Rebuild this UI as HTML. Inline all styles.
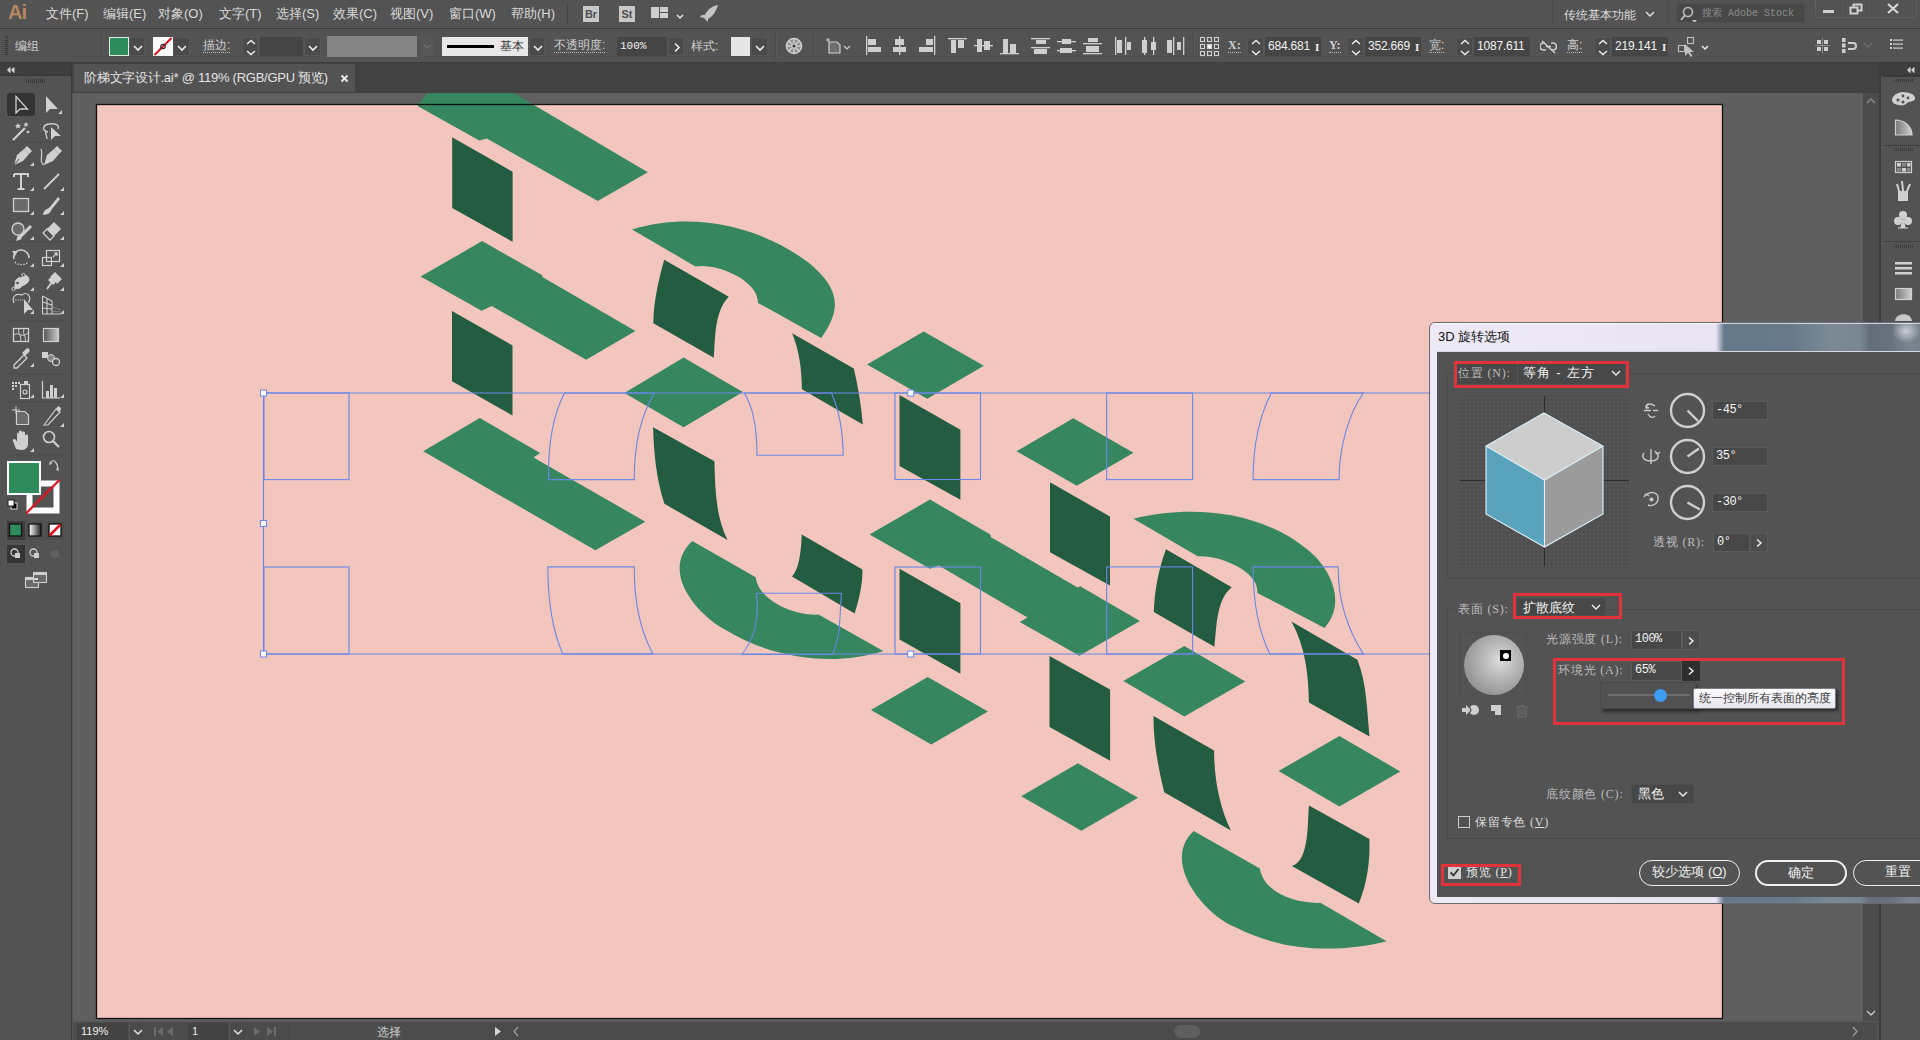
<!DOCTYPE html>
<html><head><meta charset="utf-8">
<style>
*{box-sizing:border-box;margin:0;padding:0}
html,body{width:1920px;height:1040px;overflow:hidden;background:#535353;font-family:"Liberation Sans",sans-serif;color:#d6d6d6}
.a{position:absolute}
#menubar{left:0;top:0;width:1920px;height:29px;background:#535353;border-bottom:1px solid #3a3a3a}
#ctrl{left:0;top:29px;width:1920px;height:34px;background:#535353;border-bottom:1px solid #3d3d3d}
#strip{left:0;top:63px;width:1920px;height:30px;background:#424242}
#tools{left:0;top:63px;width:72px;height:977px;background:#535353;border-right:1px solid #3a3a3a}
#dock{left:1879px;top:63px;width:41px;height:977px;background:#535353;border-left:2px solid #3c3c3c}
#canvas{left:73px;top:93px;width:1790px;height:928px;background:#5f5f5f;overflow:hidden}
#vscroll{left:1863px;top:93px;width:16px;height:928px;background:#4b4b4b}
#status{left:73px;top:1021px;width:1804px;height:19px;background:#4b4b4b;border-top:1px solid #585858}
.menu{top:6px;font-size:13px;color:#d9d9d9;white-space:nowrap;line-height:16px}
.ibox{top:6px;width:16px;height:16px;background:#c8c8c8;color:#4d4d4d;font:bold 11px/16px 'Liberation Sans',sans-serif;text-align:center}
.lbl{font-size:12px;color:#cfcfcf;line-height:16px;white-space:nowrap}
.dot{border-bottom:1px dotted #bdbdbd;line-height:14px;padding-bottom:0}
.sep{top:4px;width:1px;height:26px;background:#4a4a4a;box-shadow:1px 0 0 #5a5a5a}
.btn{top:8px;height:19px;background:#4a4a4a;border:1px solid #575757}
.btn svg{position:absolute;left:0;top:0}
.inp{top:8px;height:19px;background:#454545}
.num{color:#f2f2f2;font-family:'Liberation Sans',sans-serif;font-size:12px;line-height:19px;padding-left:3px;letter-spacing:-0.2px;white-space:nowrap}
.ib{position:absolute;right:2px;top:1px;font-family:'Liberation Serif',serif;font-weight:bold;font-size:11px}
.dl{font-size:12px;color:#bcbcbc;line-height:16px;white-space:nowrap;font-family:'Liberation Serif',serif;letter-spacing:0.8px}
.dv{font-size:13px;color:#f2f2f2;line-height:17px;white-space:nowrap}
.inp2{height:19px;background:#474747;border:1px solid #5a5a5a;color:#f4f4f4;font-size:12px;line-height:17px;padding-left:3px;font-family:'Liberation Mono',monospace;white-space:nowrap;letter-spacing:-0.5px}
.pill{border:1.5px solid #f0f0f0;border-radius:13px;color:#f0f0f0;font-size:13px;line-height:22px;text-align:center;white-space:nowrap}
</style></head><body>
<div id="menubar" class="a">
<div class="a" style="left:8px;top:1px;font:bold 20px 'Liberation Sans',sans-serif;color:#b98862;letter-spacing:-1px">Ai</div>
<div class="a menu" style="left:46px">文件(F)</div>
<div class="a menu" style="left:103px">编辑(E)</div>
<div class="a menu" style="left:158px">对象(O)</div>
<div class="a menu" style="left:219px">文字(T)</div>
<div class="a menu" style="left:276px">选择(S)</div>
<div class="a menu" style="left:333px">效果(C)</div>
<div class="a menu" style="left:390px">视图(V)</div>
<div class="a menu" style="left:449px">窗口(W)</div>
<div class="a menu" style="left:511px">帮助(H)</div>
<div class="a" style="left:567px;top:3px;width:1px;height:21px;background:#474747"></div>
<div class="a ibox" style="left:583px">Br</div>
<div class="a ibox" style="left:619px">St</div>
<svg class="a" style="left:650px;top:5px" width="40" height="16"><rect x="1" y="2" width="8" height="11" fill="#cfcfcf"/><rect x="10" y="2" width="8" height="5" fill="#cfcfcf"/><rect x="10" y="8" width="8" height="5" fill="#cfcfcf"/><path d="M27,10 L30,13 L33,10" stroke="#e6e6e6" stroke-width="1.5" fill="none"/></svg>
<svg class="a" style="left:699px;top:4px" width="22" height="20"><path d="M19,1 C13,2 8,6 6,11 L3,11 L1,13 L5,14 L9,18 L9,15 C13,13 17,8 19,1 Z" fill="#c4c4c4"/></svg>
<div class="a" style="left:1552px;top:0;width:1px;height:24px;background:#4a4a4a"></div>
<div class="a menu" style="left:1564px;top:7px;font-size:12px;color:#dedede">传统基本功能</div>
<svg class="a" style="left:1644px;top:9px" width="12" height="10"><path d="M2,3 L6,7 L10,3" stroke="#e0e0e0" stroke-width="1.5" fill="none"/></svg>
<div class="a" style="left:1667px;top:0;width:1px;height:24px;background:#4a4a4a"></div>
<div class="a" style="left:1676px;top:3px;width:129px;height:20px;background:#484848;border:1px solid #4f4f4f;border-radius:2px"></div>
<svg class="a" style="left:1680px;top:6px" width="18" height="16"><circle cx="8" cy="6" r="4.5" stroke="#bdbdbd" stroke-width="1.6" fill="none"/><path d="M5,9 L1,14" stroke="#bdbdbd" stroke-width="1.8"/><path d="M12,14 L17,14 L14.5,17 Z" fill="#bdbdbd"/></svg>
<div class="a" style="left:1702px;top:5px;font-size:10px;color:#8c8c8c;font-family:'Liberation Mono',monospace;letter-spacing:0px;top:6px">搜索 Adobe Stock</div>
<div class="a" style="left:1815px;top:-2px;width:102px;height:20px;border:1px solid #5f5f5f;border-radius:0 0 3px 3px"></div>
<div class="a" style="left:1842px;top:0;width:1px;height:17px;background:#5a5a5a"></div>
<div class="a" style="left:1869px;top:0;width:1px;height:17px;background:#5a5a5a"></div>
<div class="a" style="left:1823px;top:10px;width:11px;height:3px;background:#d0d0d0"></div>
<svg class="a" style="left:1849px;top:3px" width="15" height="12"><rect x="1.5" y="4.5" width="7" height="6" stroke="#d0d0d0" stroke-width="2" fill="none"/><path d="M4.5,4 V1.5 H12.5 V7.5 H9" stroke="#d0d0d0" stroke-width="2" fill="none"/></svg>
<svg class="a" style="left:1887px;top:3px" width="12" height="11"><path d="M1,1 L11,10 M11,1 L1,10" stroke="#d6d6d6" stroke-width="2.2"/></svg>
</div>
<div id="ctrl" class="a">
<div class="a" style="left:5px;top:7px;width:3px;height:20px;background:repeating-linear-gradient(#3a3a3a 0 1px,transparent 1px 2px)"></div>
<div class="a lbl" style="left:15px;top:9px;font-size:12px;color:#d0d0d0">编组</div>
<div class="a sep" style="left:101px"></div>
<div class="a" style="left:109px;top:8px;width:20px;height:19px;background:#2e8b5b;border:1px solid #d8f0e0"></div>
<div class="a btn" style="left:129px;width:16px"><svg width="16" height="19"><path d="M4,8 L8,12 L12,8" stroke="#eee" stroke-width="1.6" fill="none"/></svg></div>
<svg class="a" style="left:153px;top:8px" width="20" height="19"><rect x="0" y="0" width="20" height="19" fill="#fafafa"/><path d="M1.5,18 L18.5,1" stroke="#d0141e" stroke-width="2"/><circle cx="10" cy="9.5" r="2.2" fill="none" stroke="#222" stroke-width="1.1"/></svg>
<div class="a btn" style="left:173px;width:17px"><svg width="16" height="19"><path d="M4,8 L8,12 L12,8" stroke="#eee" stroke-width="1.6" fill="none"/></svg></div>
<div class="a lbl dot" style="left:203px;top:9px">描边:</div>
<div class="a btn" style="left:242px;width:16px"><svg width="16" height="19"><path d="M4,6 L8,2.5 L12,6 M4,13 L8,16.5 L12,13" stroke="#eee" stroke-width="1.4" fill="none"/></svg></div>
<div class="a inp" style="left:260px;width:43px"></div>
<div class="a btn" style="left:304px;width:17px"><svg width="16" height="19"><path d="M4,8 L8,12 L12,8" stroke="#eee" stroke-width="1.6" fill="none"/></svg></div>
<div class="a" style="left:327px;top:7px;width:90px;height:21px;background:#838383"></div>
<div class="a" style="left:421px;top:8px;width:13px;height:19px;background:#565656"><svg width="13" height="19"><path d="M3,8 L6.5,11 L10,8" stroke="#6e6e6e" stroke-width="1.2" fill="none"/></svg></div>
<div class="a" style="left:442px;top:8px;width:86px;height:19px;background:#e8e8e8"></div>
<div class="a" style="left:447px;top:16px;width:47px;height:3px;background:#000"></div>
<div class="a" style="left:500px;top:9px;font-size:12px;color:#3a3a3a;line-height:16px">基本</div>
<div class="a btn" style="left:529px;width:16px"><svg width="16" height="19"><path d="M4,8 L8,12 L12,8" stroke="#eee" stroke-width="1.6" fill="none"/></svg></div>
<div class="a lbl dot" style="left:554px;top:9px">不透明度:</div>
<div class="a inp" style="left:617px;width:50px;color:#f0f0f0;font-size:11px;line-height:19px;padding-left:3px;font-family:'Liberation Mono',monospace">100%</div>
<div class="a btn" style="left:668px;width:16px"><svg width="16" height="19"><path d="M6,5.5 L10,9.5 L6,13.5" stroke="#eee" stroke-width="1.6" fill="none"/></svg></div>
<div class="a lbl" style="left:691px;top:9px">样式:</div>
<div class="a" style="left:731px;top:8px;width:19px;height:19px;background:#e6e6e6"></div>
<div class="a btn" style="left:751px;width:17px"><svg width="16" height="19"><path d="M4,8 L8,12 L12,8" stroke="#eee" stroke-width="1.6" fill="none"/></svg></div>
<div class="a sep" style="left:775px"></div>
<svg class="a" style="left:785px;top:8px" width="18" height="18"><circle cx="9" cy="9" r="7.5" stroke="#cfcfcf" stroke-width="1.6" fill="#8d8d8d"/><g stroke="#cfcfcf" stroke-width="1.6"><path d="M9,1.5 V16.5 M1.5,9 H16.5 M3.7,3.7 L14.3,14.3 M14.3,3.7 L3.7,14.3"/></g><circle cx="9" cy="9" r="1.5" fill="#333"/></svg>
<div class="a sep" style="left:813px"></div>
<svg class="a" style="left:825px;top:8px" width="30" height="18"><path d="M3,1 V5 M1,3 H5" stroke="#cfcfcf" stroke-width="1"/><path d="M4,5 H12 L15,8 V16 H4 Z" fill="#6e6e6e" stroke="#cfcfcf" stroke-width="1.2"/><path d="M19,9 L22,12 L25,9" stroke="#cfcfcf" stroke-width="1.2" fill="none"/></svg>
<svg class="a" style="left:860px;top:4px" width="330" height="26" fill="#cfcfcf">
<rect x="6" y="3" width="1.3" height="19"/><rect x="8" y="6" width="8" height="6"/><rect x="8" y="14" width="13" height="5"/>
<rect x="39" y="3" width="1.3" height="19"/><rect x="35" y="6" width="9" height="6"/><rect x="33" y="14" width="13" height="5"/>
<rect x="74" y="3" width="1.3" height="19"/><rect x="66" y="6" width="7" height="6"/><rect x="59" y="14" width="14" height="5"/>
<rect x="88" y="5" width="19" height="1.3"/><rect x="91" y="7" width="5" height="13"/><rect x="98" y="7" width="6" height="8"/>
<rect x="114" y="12" width="19" height="1.3"/><rect x="117" y="6" width="5" height="13"/><rect x="124" y="8" width="6" height="9"/>
<rect x="140" y="20" width="19" height="1.3"/><rect x="143" y="6" width="5" height="14"/><rect x="150" y="11" width="6" height="9"/>
<rect x="171" y="5" width="19" height="1.3"/><rect x="176" y="7" width="10" height="4"/><rect x="171" y="14" width="19" height="1.3"/><rect x="174" y="16" width="13" height="5"/>
<rect x="197" y="8" width="19" height="1.3"/><rect x="202" y="6" width="9" height="5"/><rect x="197" y="17" width="19" height="1.3"/><rect x="200" y="15" width="12" height="5"/>
<rect x="223" y="10" width="19" height="1.3"/><rect x="228" y="5" width="10" height="4"/><rect x="223" y="20" width="19" height="1.3"/><rect x="226" y="13" width="13" height="6"/>
<rect x="255" y="4" width="1.3" height="18"/><rect x="257" y="7" width="5" height="13"/><rect x="265" y="4" width="1.3" height="18"/><rect x="267" y="9" width="4" height="8"/>
<rect x="284" y="4" width="1.3" height="18"/><rect x="282" y="7" width="5" height="13"/><rect x="293" y="4" width="1.3" height="18"/><rect x="291" y="9" width="5" height="8"/>
<rect x="307" y="7" width="5" height="13"/><rect x="313" y="4" width="1.3" height="18"/><rect x="317" y="9" width="4" height="8"/><rect x="323" y="4" width="1.3" height="18"/>
</svg>
<div class="a sep" style="left:1193px"></div>
<svg class="a" style="left:1199px;top:7px" width="22" height="21" fill="none" stroke="#cfcfcf" stroke-width="1.1"><rect x="1.5" y="1.5" width="4" height="4"/><rect x="8.5" y="1.5" width="4" height="4"/><rect x="15.5" y="1.5" width="4" height="4"/><rect x="1.5" y="8.5" width="4" height="4"/><rect x="8.5" y="8.5" width="4" height="4" fill="#eee"/><rect x="15.5" y="8.5" width="4" height="4"/><rect x="1.5" y="15.5" width="4" height="4"/><rect x="8.5" y="15.5" width="4" height="4"/><rect x="15.5" y="15.5" width="4" height="4"/></svg>
<div class="a lbl dot" style="left:1228px;top:9px;font-family:'Liberation Serif',serif;font-weight:bold">X:</div>
<div class="a btn" style="left:1247px;width:17px"><svg width="16" height="19"><path d="M4,6 L8,2.5 L12,6 M4,13 L8,16.5 L12,13" stroke="#eee" stroke-width="1.4" fill="none"/></svg></div>
<div class="a inp num" style="left:1265px;width:56px">684.681 <span class="ib">I</span></div>
<div class="a lbl dot" style="left:1329px;top:9px;font-family:'Liberation Serif',serif;font-weight:bold">Y:</div>
<div class="a btn" style="left:1347px;width:17px"><svg width="16" height="19"><path d="M4,6 L8,2.5 L12,6 M4,13 L8,16.5 L12,13" stroke="#eee" stroke-width="1.4" fill="none"/></svg></div>
<div class="a inp num" style="left:1365px;width:56px">352.669 <span class="ib">I</span></div>
<div class="a lbl dot" style="left:1429px;top:9px">宽:</div>
<div class="a btn" style="left:1456px;width:17px"><svg width="16" height="19"><path d="M4,6 L8,2.5 L12,6 M4,13 L8,16.5 L12,13" stroke="#eee" stroke-width="1.4" fill="none"/></svg></div>
<div class="a inp num" style="left:1474px;width:56px">1087.611</div>
<svg class="a" style="left:1540px;top:11px" width="17" height="14"><path d="M5,3 H3.5 A3.5,3.5 0 0 0 3.5,10 H6 M11,3 H13 A3.5,3.5 0 0 1 13,10 H11 M6,6.5 H11" stroke="#cfcfcf" stroke-width="1.7" fill="none"/><path d="M2,1 L15,13" stroke="#cfcfcf" stroke-width="1.5"/></svg>
<div class="a lbl dot" style="left:1567px;top:9px">高:</div>
<div class="a btn" style="left:1594px;width:17px"><svg width="16" height="19"><path d="M4,6 L8,2.5 L12,6 M4,13 L8,16.5 L12,13" stroke="#eee" stroke-width="1.4" fill="none"/></svg></div>
<div class="a inp num" style="left:1612px;width:56px">219.141 <span class="ib">I</span></div>
<svg class="a" style="left:1677px;top:7px" width="36" height="22"><rect x="1.5" y="9.5" width="6" height="6" stroke="#bfbfbf" fill="none" stroke-width="1.1"/><rect x="10.5" y="1.5" width="6" height="6" stroke="#bfbfbf" fill="none" stroke-width="1.1"/><path d="M8,8 L8,20 L11,17 L14,21 L15.5,20 L13,16 L17,16 Z" fill="#bfbfbf"/><path d="M25,10 L28,13 L31,10" stroke="#eee" stroke-width="1.5" fill="none"/></svg>
<svg class="a" style="left:1815px;top:9px" width="16" height="16" fill="#cfcfcf"><rect x="2" y="2" width="4" height="4"/><rect x="9" y="2" width="4" height="4"/><rect x="2" y="9" width="4" height="4"/><rect x="9" y="9" width="4" height="4"/><rect x="7" y="0" width="1" height="15" fill="#8a8a8a"/><rect x="0" y="7" width="15" height="1" fill="#8a8a8a"/></svg>
<svg class="a" style="left:1841px;top:9px" width="18" height="16"><rect x="1" y="0" width="3.5" height="4" fill="#cfcfcf"/><rect x="1" y="5.5" width="3.5" height="4" fill="#cfcfcf"/><rect x="1" y="11" width="3.5" height="4" fill="#cfcfcf"/><path d="M7,5 H12 A3,3 0 0 1 12,11 H7" stroke="#cfcfcf" stroke-width="2" fill="none"/></svg>
<svg class="a" style="left:1863px;top:12px" width="10" height="8"><path d="M1,2 L5,6 L9,2" stroke="#6a6a6a" stroke-width="1.5" fill="none"/></svg>
<svg class="a" style="left:1890px;top:10px" width="14" height="12" fill="#cfcfcf"><rect x="0" y="0" width="2" height="2"/><rect x="3" y="0.5" width="10" height="1.2"/><rect x="0" y="4" width="2" height="2"/><rect x="3" y="4.5" width="10" height="1.2"/><rect x="0" y="8" width="2" height="2"/><rect x="3" y="8.5" width="10" height="1.2"/></svg>
</div>
<div id="strip" class="a">
<div class="a" style="left:74px;top:1px;width:281px;height:28px;background:#535353"></div>
<div class="a" style="left:84px;top:6px;font-size:13px;color:#e2e2e2;white-space:nowrap;line-height:17px;letter-spacing:-0.25px">阶梯文字设计.ai* @ 119% (RGB/GPU 预览)</div>
<svg class="a" style="left:340px;top:11px" width="9" height="9"><path d="M1.5,1.5 L7.5,7.5 M7.5,1.5 L1.5,7.5" stroke="#e8e8e8" stroke-width="2"/></svg>
<div class="a" style="left:1877px;top:0;width:43px;height:13px;background:#3e3e3e"></div>
<svg class="a" style="left:1905px;top:3px" width="10" height="8"><path d="M4,1 L1,4 L4,7 M8,1 L5,4 L8,7" stroke="#dcdcdc" stroke-width="1.4" fill="none"/></svg>
</div>
<div id="tools" class="a">
<div class="a" style="left:0;top:0;width:71px;height:13px;background:#3e3e3e;border-bottom:1px solid #383838"></div>
<svg class="a" style="left:6px;top:3px" width="10" height="8"><path d="M4,1.5 L1.5,4 L4,6.5 Z M8,1.5 L5.5,4 L8,6.5 Z" stroke="#d6d6d6" stroke-width="1" fill="#d6d6d6"/></svg>
<div class="a" style="left:26px;top:16px;width:20px;height:4px;background:repeating-linear-gradient(90deg,#3a3a3a 0 1px,transparent 1px 2px)"></div>
<svg class="a" style="left:0;top:0" width="72" height="400"><rect x="7" y="30" width="28" height="23" rx="3" fill="#333"/><path d="M16,33.5 L16,50 L20,46 L27.5,46 Z" fill="none" stroke="#d0d0d0" stroke-width="1.3"/><path d="M46,33 L46,50 L50,46 L58,46 Z" fill="#d0d0d0"/><path d="M58,51 L62,47 L62,51 Z" fill="#cfcfcf"/><path d="M13,77 L25,65" stroke="#d0d0d0" stroke-width="2.2"/><path d="M18,60 l1,2 2,0 -1.5,1.5 .5,2 -2,-1 -2,1 .5,-2 -1.5,-1.5 2,0z M26,59 l.8,1.6 1.7,.2 -1.2,1.2 .3,1.7 -1.6,-.8 -1.6,.8 .3,-1.7 -1.2,-1.2 1.7,-.2z M28,67 l.6,1.2 1.3,.1 -1,.9 .3,1.3 -1.2,-.6 -1.2,.6 .3,-1.3 -1,-.9 1.3,-.1z" fill="#d0d0d0"/><path d="M48,69 C42,68 42,62 49,61 C55,60 60,62 58,66" fill="none" stroke="#d0d0d0" stroke-width="1.4"/><path d="M46,68 C45,71 47,73 47,76" fill="none" stroke="#d0d0d0" stroke-width="1.3"/><path d="M51,64 L51,77 L55,73 L61,73 Z" fill="#d0d0d0"/><rect x="7" y="78.5" width="57" height="1" fill="#4a4a4a"/><rect x="7" y="178.5" width="57" height="1" fill="#4a4a4a"/><rect x="7" y="257.5" width="57" height="1" fill="#4a4a4a"/><rect x="7" y="310.5" width="57" height="1" fill="#4a4a4a"/><rect x="7" y="338.5" width="57" height="1" fill="#4a4a4a"/><rect x="7" y="391.5" width="57" height="1" fill="#4a4a4a"/><path d="M14,102 L17,92 L24,86 L29,91 L23,98 Z" fill="#d0d0d0"/><path d="M24,86 L27,83 L32,88 L29,91" fill="#d0d0d0"/><path d="M14,102 L19,96" stroke="#535353" stroke-width="1"/><path d="M30,103 L34,99 L34,103 Z" fill="#cfcfcf"/><path d="M44,102 L47,92 L54,86 L59,91 L53,98 Z" fill="#d0d0d0"/><path d="M54,86 L57,83 L62,88 L59,91" fill="#d0d0d0"/><path d="M44,102 C38,98 44,92 41,86" fill="none" stroke="#d0d0d0" stroke-width="1.2"/><path d="M14,111 H28 V114 M14,111 V114 M21,111 V126 M17.5,126 H24.5" fill="none" stroke="#d0d0d0" stroke-width="2"/><path d="M30,128 L34,124 L34,128 Z" fill="#cfcfcf"/><path d="M44,126 L59,111" stroke="#d0d0d0" stroke-width="1.8"/><path d="M60,128 L64,124 L64,128 Z" fill="#cfcfcf"/><rect x="13.5" y="135.5" width="15" height="13" fill="#6a6a6a" stroke="#d0d0d0" stroke-width="1.3"/><path d="M30,152 L34,148 L34,152 Z" fill="#cfcfcf"/><path d="M58,134 L50,144 L47,146 C44,147 43,150 43,152 L48,151 C50,150 51,148 52,146 L60,136 Z" fill="#d0d0d0"/><path d="M60,152 L64,148 L64,152 Z" fill="#cfcfcf"/><circle cx="18" cy="166" r="6" fill="#6a6a6a" stroke="#d0d0d0" stroke-width="1.4"/><path d="M18,176 L31,163" stroke="#d0d0d0" stroke-width="3"/><path d="M16,178 L18,172 L22,176 Z" fill="#d0d0d0"/><path d="M30,177 L34,173 L34,177 Z" fill="#cfcfcf"/><path d="M43,170 L54,159 L61,166 L50,177 Z" fill="#d0d0d0"/><path d="M43,170 L47,166 L54,173 L50,177 Z" fill="#535353" stroke="#d0d0d0" stroke-width="1.3"/><path d="M60,177 L64,173 L64,177 Z" fill="#cfcfcf"/><path d="M14,196 C13,191 16,187 21,187 C26,187 29,191 29,195" fill="none" stroke="#d0d0d0" stroke-width="1.6"/><path d="M12,188 L15,193 L18,188 Z" fill="#d0d0d0"/><path d="M15,199 C17,202 25,203 28,199" fill="none" stroke="#d0d0d0" stroke-width="1.4" stroke-dasharray="1.5 1.5"/><path d="M30,204 L34,200 L34,204 Z" fill="#cfcfcf"/><rect x="42.5" y="194.5" width="9" height="8" fill="none" stroke="#d0d0d0" stroke-width="1.2"/><rect x="46.5" y="187.5" width="13" height="11" fill="none" stroke="#d0d0d0" stroke-width="1.2"/><path d="M53,194 L57,190 M54,190 H57 V193" stroke="#d0d0d0" stroke-width="1.2" fill="none"/><path d="M60,204 L64,200 L64,204 Z" fill="#cfcfcf"/><path d="M15,219 C18,212 23,216 24,213 C26,211 31,215 28,219 C26,222 22,222 20,225 L14,226" fill="#d0d0d0" stroke="#d0d0d0" stroke-width="1"/><circle cx="13.5" cy="226" r="1.6" fill="#535353" stroke="#d0d0d0"/><circle cx="23.5" cy="212" r="1.6" fill="#535353" stroke="#d0d0d0"/><circle cx="17.5" cy="220" r="1.8" fill="#535353" stroke="#d0d0d0"/><path d="M30,228 L34,224 L34,228 Z" fill="#cfcfcf"/><path d="M52,219 L47,226" stroke="#d0d0d0" stroke-width="1.8"/><path d="M50,214 L55,209 L62,216 L57,221 L56,219 L53,222 L48,217 L51,214 Z" fill="#d0d0d0"/><path d="M60,228 L64,224 L64,228 Z" fill="#cfcfcf"/><path d="M14,240 C11,233 17,230 22,232 C26,228 33,233 28,240" fill="none" stroke="#d0d0d0" stroke-width="1.2"/><path d="M15,237 H24" stroke="#d0d0d0" stroke-width="1" stroke-dasharray="1.2 1.2"/><path d="M24,236 L24,251 L28,247 L33,247 Z" fill="#d0d0d0"/><path d="M30,251 L34,247 L34,251 Z" fill="#cfcfcf"/><path d="M42.5,233 V251 H61 M42.5,233 L52,238 V251 M42.5,239 L52,242 M42.5,245 L52,246 M47,235 V251" fill="none" stroke="#d0d0d0" stroke-width="1.1"/><path d="M52,244 L61,247 M52,248 L61,249" stroke="#8a8a8a" stroke-width="0.8"/><path d="M60,251 L64,247 L64,251 Z" fill="#cfcfcf"/><rect x="13.5" y="265.5" width="15" height="13" fill="none" stroke="#d0d0d0" stroke-width="1.3"/><path d="M14,272 C18,268 22,276 28,270 M19,266 C17,271 23,274 20,279 M24,266 C22,271 27,274 25,279" fill="none" stroke="#d0d0d0" stroke-width="1"/><defs><linearGradient id="tg" x1="0" x2="1"><stop offset="0" stop-color="#555"/><stop offset="1" stop-color="#ccc"/></linearGradient></defs><rect x="43.5" y="265.5" width="15" height="13" fill="url(#tg)" stroke="#d0d0d0" stroke-width="1.2"/><path d="M14,302 L24,292 L27,295 L17,305 L14,305 Z" fill="none" stroke="#d0d0d0" stroke-width="1.3"/><path d="M22,290 L26,286 C28,284 31,287 29,289 L25,293 Z" fill="#d0d0d0"/><path d="M30,304 L34,300 L34,304 Z" fill="#cfcfcf"/><rect x="42" y="289" width="6" height="6" fill="#d0d0d0"/><circle cx="51" cy="295" r="3.5" fill="#888" stroke="#d0d0d0"/><circle cx="56" cy="299" r="3.5" fill="#535353" stroke="#d0d0d0" stroke-width="1.3"/><g fill="#d0d0d0"><rect x="12" y="319" width="2" height="2"/><rect x="15" y="319" width="2" height="2"/><rect x="18" y="319" width="2" height="2"/><rect x="12" y="322" width="2" height="2"/><rect x="15" y="322" width="2" height="2"/><rect x="12" y="325" width="2" height="2"/><rect x="24" y="318" width="4" height="3"/></g><rect x="20.5" y="321.5" width="9" height="14" fill="none" stroke="#d0d0d0" stroke-width="1.2"/><circle cx="25" cy="329" r="2" fill="none" stroke="#d0d0d0" stroke-width="1.2"/><path d="M30,335 L34,331 L34,335 Z" fill="#cfcfcf"/><path d="M42.5,318 V335 H60" fill="none" stroke="#d0d0d0" stroke-width="1.2"/><rect x="46" y="328" width="3" height="7" fill="#d0d0d0"/><rect x="50" y="322" width="3" height="13" fill="#d0d0d0"/><rect x="54" y="325" width="3" height="10" fill="#d0d0d0"/><path d="M60,335 L64,331 L64,335 Z" fill="#cfcfcf"/><path d="M12,347 H20 M16,343 V351" stroke="#d0d0d0" stroke-width="1"/><path d="M16.5,348.5 H25 L28.5,352 V361.5 H16.5 Z" fill="#6a6a6a" stroke="#d0d0d0" stroke-width="1.2"/><path d="M44,362 L56,346 L60,349 L48,362 Z" fill="none" stroke="#d0d0d0" stroke-width="1.2"/><path d="M56,346 L58,343 L61,345 L60,349 Z" fill="#d0d0d0"/><path d="M60,364 L64,360 L64,364 Z" fill="#cfcfcf"/><path d="M16,386 L13,378 C12,376 15,375 16,377 L17,379 V371 C17,369 19,369 19,371 V377 V369 C19,367 22,367 22,369 V377 V370 C22,368 25,368 25,370 V378 V373 C25,371 28,371 28,373 V381 C28,385 25,387 21,387 Z" fill="#d0d0d0"/><path d="M30,389 L34,385 L34,389 Z" fill="#cfcfcf"/><circle cx="49" cy="374" r="5.5" fill="none" stroke="#d0d0d0" stroke-width="1.6"/><path d="M53,378 L59,384" stroke="#d0d0d0" stroke-width="2.2"/></svg>
<svg class="a" style="left:0;top:392px" width="72" height="140">
<path d="M51,8 C51,5 55,5 56,8" fill="none" stroke="#cfcfcf" stroke-width="1.2"/><path d="M50,6 L52,9 L49,10 Z M58,12 L56,15 L59,16 Z" fill="#cfcfcf"/><path d="M56,8 C58,10 58,13 57,14" fill="none" stroke="#cfcfcf" stroke-width="1.2"/>
<rect x="26.5" y="25.5" width="33" height="33" fill="#fff"/><rect x="32.5" y="31.5" width="21" height="21" fill="#535353"/>
<path d="M26,58.5 L59.5,25" stroke="#e0101e" stroke-width="2.2"/>
<rect x="7" y="6" width="34" height="34" fill="#fff"/><rect x="9" y="8" width="30" height="30" fill="#2e8b5b"/>
<rect x="11" y="48" width="6" height="6" fill="#000" stroke="#ddd" stroke-width="1"/><rect x="8" y="45" width="6" height="6" fill="#fff" stroke="#222" stroke-width="1"/>
<rect x="7" y="66" width="18" height="19" fill="#3c3c3c"/><rect x="9.5" y="69" width="12" height="12" fill="#2e8b5b" stroke="#111" stroke-width="1.3"/>
<rect x="25" y="66" width="19" height="19" fill="#4f4f4f"/><defs><linearGradient id="tg2" x1="0" x2="1"><stop offset="0" stop-color="#fff"/><stop offset="1" stop-color="#222"/></linearGradient></defs><rect x="29" y="69" width="12" height="12" fill="url(#tg2)" stroke="#111" stroke-width="1.3"/>
<rect x="45" y="66" width="19" height="19" fill="#4f4f4f"/><rect x="49" y="69" width="12" height="12" fill="#fff" stroke="#111" stroke-width="1.3"/><path d="M49.5,80.5 L60.5,69.5" stroke="#e0101e" stroke-width="2.5"/>
<rect x="7" y="90" width="18" height="18" fill="#353535"/><circle cx="14.5" cy="97.5" r="3.5" fill="none" stroke="#cfcfcf" stroke-width="1.3"/><rect x="15" y="98" width="5" height="5" fill="#cfcfcf"/>
<circle cx="33.5" cy="97.5" r="3.5" fill="none" stroke="#cfcfcf" stroke-width="1.3"/><rect x="34" y="98" width="5" height="5" fill="#cfcfcf"/>
<circle cx="55" cy="99" r="4" fill="#626262"/>
<rect x="25.5" y="122.5" width="13" height="10" fill="#6a6a6a" stroke="#cfcfcf" stroke-width="1.1"/><rect x="33.5" y="117.5" width="13" height="10" fill="#6a6a6a" stroke="#cfcfcf" stroke-width="1.1"/><rect x="34" y="118" width="12" height="2" fill="#cfcfcf"/><rect x="26" y="123" width="12" height="2" fill="#cfcfcf"/>
</svg>
</div>
<div id="dock" class="a">
<div class="a" style="left:0;top:0;width:43px;height:13px;background:#3e3e3e;border-bottom:1px solid #383838"></div>
<svg class="a" style="left:25px;top:3px" width="10" height="8"><path d="M4,1.5 L1.5,4 L4,6.5 Z M8,1.5 L5.5,4 L8,6.5 Z" stroke="#d6d6d6" stroke-width="1" fill="#d6d6d6"/></svg>
<div class="a" style="left:2px;top:13px;width:39px;height:1px;background:#3a3a3a"></div>
<div class="a" style="left:2px;top:82px;width:41px;height:1px;background:#3d3d3d"></div>
<div class="a" style="left:2px;top:178px;width:41px;height:1px;background:#3d3d3d"></div>
<div class="a" style="left:13px;top:16px;width:20px;height:3px;background:repeating-linear-gradient(90deg,#3a3a3a 0 1px,transparent 1px 2px)"></div>
<div class="a" style="left:13px;top:85px;width:20px;height:3px;background:repeating-linear-gradient(90deg,#3a3a3a 0 1px,transparent 1px 2px)"></div>
<div class="a" style="left:13px;top:182px;width:20px;height:3px;background:repeating-linear-gradient(90deg,#3a3a3a 0 1px,transparent 1px 2px)"></div>
<svg class="a" style="left:-3px;top:0" width="43" height="270">
<path d="M24,29 C32,29 38,32 37,36 C36,39 31,38 29,40 C27,43 22,43 17,41 C12,39 13,31 24,29 Z" fill="#d0d0d0"/><circle cx="20" cy="37" r="1.6" fill="#535353"/><circle cx="25" cy="39" r="1.6" fill="#535353"/><circle cx="30" cy="35" r="1.4" fill="#535353"/><circle cx="25" cy="33" r="1.4" fill="#535353"/>
<defs><linearGradient id="dg" x1="0" x2="1"><stop offset="0" stop-color="#777"/><stop offset="1" stop-color="#d0d0d0"/></linearGradient></defs>
<path d="M17.5,57 V72 H34 C34,64 27,57 17.5,57 Z" fill="url(#dg)" stroke="#d0d0d0" stroke-width="1.2"/>
<rect x="17.5" y="98.5" width="16" height="11" fill="none" stroke="#d0d0d0" stroke-width="1.2"/><rect x="19" y="100" width="4" height="3.5" fill="#d0d0d0"/><rect x="24" y="100" width="4" height="3.5" fill="#888"/><rect x="29" y="100" width="3.5" height="3.5" fill="#d0d0d0"/><rect x="19" y="105" width="4" height="3.5" fill="#888"/><rect x="24" y="105" width="4" height="3.5" fill="#d0d0d0"/><rect x="29" y="105" width="3.5" height="3.5" fill="#888"/>
<path d="M20,128 H30 V138 H20 Z" fill="#d0d0d0"/><path d="M21,128 L19,121 M25,128 L24,118 M29,128 L32,121" stroke="#d0d0d0" stroke-width="2"/>
<circle cx="25" cy="152" r="4" fill="#d0d0d0"/><circle cx="20" cy="158" r="4" fill="#d0d0d0"/><circle cx="30" cy="158" r="4" fill="#d0d0d0"/><path d="M25,156 L23,165 H27 Z M20,165 H30" stroke="#d0d0d0" stroke-width="1.2" fill="#d0d0d0"/>
<rect x="17" y="199" width="17" height="2.5" fill="#d0d0d0"/><rect x="17" y="204" width="17" height="2.5" fill="#d0d0d0"/><rect x="17" y="209" width="17" height="2.5" fill="#d0d0d0"/>
<rect x="17.5" y="225.5" width="16" height="11" fill="url(#dg)" stroke="#d0d0d0" stroke-width="1.2"/>
<path d="M17,258 C17,250 33,248 34,258 Z" fill="#c8c8c8"/>
</svg>
</div>
<div id="canvas" class="a">
<svg class="a" style="left:-73px;top:-93px" width="1920" height="1040" viewBox="0 0 1920 1040">
<rect x="96.5" y="104.5" width="1626" height="914" fill="#f2c6bd"/>
<g fill="#36875f">
<path d="M417.5,106 L479.3,140.5 L486.8,138.5 L597.8,201.1 L647.8,172.2 L512,92 L428,92 Z"/>
<path d="M420.6,276.6 L482.1,241.1 L541.8,275.1 L542.8,277.2 L635.4,331.1 L586.2,359.7 L491.7,306 L481.6,310.8 Z"/>
<path d="M423.2,451.2 L479.8,418.1 L540.2,453 L533.5,457.5 L645.3,521.7 L595.4,550.3 Z"/>
<path d="M632.1,229.5 C691.6,211.3 759.1,225.3 808.4,262.5 C837.9,287 843.6,307 821.2,337.9 L758,302.9 C758.8,279.9 715.3,262.3 695.4,266.5 Z"/>
<path d="M692.3,540.9 L755.7,577.2 C758.6,601.7 797.2,616.5 818.5,614.5 L883.3,651 C831.3,667.3 772.1,658.1 725.8,630.1 C697.1,614.8 659.6,571.6 692.3,540.9 Z"/>
<path d="M1133.5,518.8 C1194.6,503.9 1267.8,511.4 1315.2,556.5 C1333.8,576.1 1344.4,605.4 1324.6,627.9 L1257.3,592.9 C1259.7,570.3 1215.8,554.1 1198.1,556.5 Z"/>
<path d="M1193.7,830.9 L1259.9,868.5 C1263.9,894.1 1298.6,903.9 1320.4,902.8 L1386.6,941.2 C1336.6,953.6 1281.7,951.3 1235.4,927.3 C1204,914.9 1160.6,861.7 1193.7,830.9 Z"/>
<path d="M624.4,392.9 l59.2,-35.3 l59.2,34.4 l-59.2,35.3 Z"/><path d="M867.0,364.4 l56.7,-33 l60.2,34.4 l-56.7,33 Z"/><path d="M1016.6,451.3 l56.7,-33 l60.2,34.4 l-56.7,33 Z"/><path d="M871.0,710.0 l56.7,-33 l60.2,34.4 l-56.7,33 Z"/><path d="M1123.3,681.1 l61,-35 l61,35.3 l-61,35 Z"/><path d="M1021.2,796.3 l56.7,-33 l60.2,34.4 l-56.7,33 Z"/><path d="M1278.5,771.1 l60.9,-35 l60.9,35.3 l-60.9,35 Z"/>
<path d="M869.5,534.5 L930,499.5 L990.3,534.6 L991,537.2 L1077.6,587.4 L1080.2,586.2 L1139.9,621.1 L1079.4,655.7 L1019.7,622 L1027.5,617.6 L938.75,565.5 L930,568.75 Z"/>
</g>
<g fill="#235c41">
<path d="M452.2,137.2 L512.6,171.8 L512.6,241.8 L452.2,207.9 Z"/>
<path d="M452,311 L512.5,345.5 L512.5,415.5 L452,381.25 Z"/>
<path d="M664.2,259.8 L728.8,296.7 C714.1,311.3 715.3,339.3 713.8,357.8 L653.3,323.2 C653.7,301.7 658.4,280.4 664.2,259.8 Z"/>
<path d="M792.1,333.3 L853.8,368.4 C858.2,386.8 861.2,405.5 862.8,424.4 L801.9,389.2 C801.8,370.3 799.5,350.9 792.1,333.3 Z"/>
<path d="M653.1,427.3 L714.4,461.3 C715.2,487.7 715.4,515.8 727.5,540 L664.4,503.8 C656.4,479.2 653.8,453.1 653.1,427.3 Z"/>
<path d="M801.7,534.6 L862.4,569.5 C862.7,584.5 859,599.2 854.7,613.4 L792,576.5 C800.3,568.5 801.4,545 801.7,534.6 Z"/>
<path d="M1166,549.2 L1231.7,587.3 C1215.7,600.4 1216.7,628.9 1214.4,646.7 L1153.8,612.1 C1154.5,590.7 1158.5,569.3 1166,549.2 Z"/>
<path d="M1291.4,621.4 L1357.4,659.8 C1367,684 1367,711.1 1369.5,736.5 L1308.9,702.6 C1308.6,674.9 1305.3,645.9 1291.4,621.4 Z"/>
<path d="M1153.5,715.9 L1214.1,750.5 C1214.1,777.9 1219.1,805.7 1230.9,830.6 L1164.2,792.2 C1158.1,767.3 1153.3,741.7 1153.5,715.9 Z"/>
<path d="M1309,805.5 L1369.4,839 C1370.2,860.9 1367.2,883.2 1358.8,903.6 L1291.8,866 C1310.1,861.1 1307.3,819.2 1309,805.5 Z"/>
<path d="M899.5,395.1 L960.4,429.7 L960.4,499.8 L899.5,466.1 Z"/>
<path d="M899.5,568.8 L960.4,603.3 L960.4,673.8 L899.5,639.5 Z"/>
<path d="M1050,482.3 L1110,516.5 L1110,585.5 L1050,552.2 Z"/>
<path d="M1049.5,655.9 L1110.1,689.5 L1110.1,760.7 L1049.5,726.9 Z"/>
</g>
<rect x="96.5" y="104.5" width="1626" height="914" fill="none" stroke="#111" stroke-width="1.3"/>
<g fill="none" stroke="#6b87e6" stroke-width="1.1">
<path d="M263.5,393 H1440 M263.5,654 H1440 M263.5,393 V654"/>
<rect x="264" y="393" width="85" height="86.6"/>
<rect x="264" y="567" width="85" height="87"/>
<path d="M564.5,393 L654.4,393 C643,412 634,440 634.3,479.6 L548.4,479.6 C548,445 553,415 564.5,393 Z"/>
<path d="M744.2,393 C752,405 757,425 757,455.3 L843.2,455.3 C843,430 838,408 831.5,393 Z"/>
<path d="M547.8,566.9 L634.3,566.9 C634,600 640,630 653,653.9 L562.9,653.9 C552,630 548,600 547.8,566.9 Z"/>
<path d="M756.4,593.2 L841.5,593.2 C839.5,613.4 841.3,635.5 832.4,654.5 L741.8,654.5 C755.8,637.8 759.2,614.3 756.4,593.2 Z"/>
<rect x="895" y="393" width="85.5" height="86.5"/>
<rect x="895" y="567" width="85.5" height="87"/>
<rect x="1106.7" y="393" width="85.9" height="86.6"/>
<rect x="1106.7" y="566.9" width="85.9" height="87"/>
<path d="M1271.3,393 L1363.3,393 C1350,412 1339,445 1339,479.6 L1253.1,479.6 C1253,445 1260,415 1271.3,393 Z"/>
<path d="M1253.1,566.9 L1338.2,566.9 C1338,600 1348,630 1363.3,653.9 L1269.9,653.9 C1258,630 1253,600 1253.1,566.9 Z"/>
</g>
<g fill="#fff" stroke="#6b87e6" stroke-width="1">
<rect x="260.5" y="390" width="6" height="6"/>
<rect x="260.5" y="520.5" width="6" height="6"/>
<rect x="260.5" y="651" width="6" height="6"/>
<rect x="907.75" y="390" width="6" height="6"/>
<rect x="907.75" y="651" width="6" height="6"/>
</g>
</svg>
</div>
<div id="vscroll" class="a">
<svg class="a" style="left:3px;top:4px" width="10" height="8"><path d="M1,6 L5,2 L9,6" stroke="#8d8d8d" stroke-width="1.4" fill="none"/></svg>
<svg class="a" style="left:3px;top:916px" width="10" height="8"><path d="M1,2 L5,6 L9,2" stroke="#c8c8c8" stroke-width="1.4" fill="none"/></svg>
</div>
<div id="status" class="a">
<div class="a" style="left:4px;top:1px;width:51px;height:17px;background:#434343;color:#efefef;font-size:11px;line-height:17px;padding-left:4px;font-family:'Liberation Sans',sans-serif">119%</div>
<div class="a" style="left:56px;top:1px;width:16px;height:17px;background:#4a4a4a;border-left:1px solid #5a5a5a"><svg class="a" style="left:3px;top:5px" width="10" height="8"><path d="M1,2 L5,6 L9,2" stroke="#e6e6e6" stroke-width="1.5" fill="none"/></svg></div>
<svg class="a" style="left:80px;top:4px" width="35" height="11" fill="#6b6b6b"><rect x="1" y="1" width="2" height="9"/><path d="M10,1 L4,5.5 L10,10 Z M20,1 L14,5.5 L20,10 Z"/></svg>
<div class="a" style="left:115px;top:1px;width:40px;height:17px;background:#434343;color:#efefef;font-size:11px;line-height:17px;padding-left:4px">1</div>
<div class="a" style="left:156px;top:1px;width:16px;height:17px;background:#4a4a4a;border-left:1px solid #5a5a5a"><svg class="a" style="left:3px;top:5px" width="10" height="8"><path d="M1,2 L5,6 L9,2" stroke="#e6e6e6" stroke-width="1.5" fill="none"/></svg></div>
<svg class="a" style="left:180px;top:4px" width="35" height="11" fill="#6b6b6b"><path d="M1,1 L7,5.5 L1,10 Z M14,1 L20,5.5 L14,10 Z"/><rect x="21" y="1" width="2" height="9"/></svg>
<div class="a" style="left:216px;top:1px;width:200px;height:17px;background:#4d4d4d;border-left:1px solid #444"></div>
<div class="a" style="left:304px;top:2px;font-size:12px;color:#cfcfcf;line-height:16px">选择</div>
<svg class="a" style="left:420px;top:4px" width="10" height="11"><path d="M2,1 L8,5.5 L2,10 Z" fill="#d6d6d6"/></svg>
<svg class="a" style="left:439px;top:4px" width="8" height="11"><path d="M6,1 L2,5.5 L6,10" stroke="#9a9a9a" stroke-width="1.3" fill="none"/></svg>
<div class="a" style="left:1101px;top:3px;width:26px;height:13px;border-radius:7px;background:#5e5e5e"></div>
<svg class="a" style="left:1778px;top:4px" width="8" height="11"><path d="M2,1 L6,5.5 L2,10" stroke="#9a9a9a" stroke-width="1.3" fill="none"/></svg>
</div>
<div id="dlg" class="a" style="left:1429px;top:322px;width:500px;height:582px;border:1px solid #6a6a72;border-radius:6px 0 0 6px;background:radial-gradient(ellipse 14px 12px at 476px 8px,rgba(220,225,230,.8),transparent),linear-gradient(90deg,#ede9f6 0,#e8e4f2 286px,#66798a 294px,#67798a 360px,#7b8995 400px,#7a8793 430px,#636e7a 440px,#68727e 460px,#7b8590 480px,#737d88 500px);overflow:hidden">
<div class="a" style="left:0;top:0;width:500px;height:1px;background:rgba(255,255,255,.7)"></div>
<div class="a" style="left:8px;top:5px;font-size:13px;color:#141414;line-height:18px;white-space:nowrap">3D 旋转选项</div>
<div class="a" style="left:7px;top:28px;width:493px;height:546px;background:#535353;border-top:1px solid #d8d8e0"></div>
</div>
<div id="dbody" class="a" style="left:1436px;top:351px;width:484px;height:546px">
<div class="a" style="left:11px;top:22px;width:473px;height:206px;border:1px solid #4a4a4a;border-right:none"></div>
<div class="a" style="left:11px;top:258px;width:473px;height:230px;border:1px solid #4a4a4a;border-right:none"></div>
<div class="a" style="left:17px;top:9px;width:175px;height:27px;background:#535353"></div>
<div class="a" style="left:20px;top:12px;width:169px;height:21px;background:#484848"></div>
<div class="a dl" style="left:22px;top:14px">位置 (N):</div>
<div class="a" style="left:81px;top:12px;width:1px;height:21px;background:#555"></div>
<div class="a dv" style="left:87px;top:13px;letter-spacing:1.2px">等角 - 左方</div>
<svg class="a" style="left:175px;top:18px" width="10" height="8"><path d="M1,2 L5,6 L9,2" stroke="#eaeaea" stroke-width="1.5" fill="none"/></svg>
<div class="a" style="left:17.5px;top:9.5px;width:175.5px;height:27.5px;border:3px solid #e2323c"></div>
<div class="a" style="left:22px;top:43px;width:173px;height:174px;background-image:radial-gradient(#444 0.6px,transparent 0.8px);background-size:4px 4px;background-color:#535353"></div>
<svg class="a" style="left:22px;top:43px" width="175" height="175">
<path d="M86.5,2 V18 M86.5,152 V172 M2,86.5 H28 M145,86.5 H171" stroke="#2c2c2c" stroke-width="1"/>
<path d="M86,19 L145,52 L86.5,86 L28,52 Z" fill="#cdcdcd"/>
<path d="M28,52 L86.5,86 V153 L28,120 Z" fill="#5aa3bc"/>
<path d="M145,52 V120 L86.5,153 V86 Z" fill="#9b9b9b"/>
<path d="M86,19 L145,52 V120 L86.5,153 L28,120 V52 Z M28,52 L86.5,86 L145,52 M86.5,86 V153" fill="none" stroke="#dff2f8" stroke-width="1.1"/>
</svg>
<svg class="a" style="left:200px;top:40px" width="140" height="170">
<g fill="none" stroke="#cfcfcf">
<circle cx="51.5" cy="19.5" r="16.5" stroke-width="2.4"/><path d="M51.5,19.5 L62,30" stroke-width="2.4"/>
<circle cx="51.5" cy="65.5" r="16.5" stroke-width="2.4"/><path d="M51.5,65.5 L63,57.5" stroke-width="2.4"/>
<circle cx="51.5" cy="111.5" r="16.5" stroke-width="2.4"/><path d="M51.5,111.5 L64,118.5" stroke-width="2.4"/>
</g>
<g fill="none" stroke="#c8c8c8" stroke-width="1.4">
<path d="M8,19.5 H15 M17,19.5 H22 M19,15 C13,11 8,14 11,18 M12,23 C14,27 18,27 19,25" /><path d="M12,13 L10,16 L13,17"/>
<path d="M15,58 V73 M8,62 C5,66 8,70 15,70 C21,70 24,66 21,62 M19,60 L21,63 L24,61"/>
<path d="M10,104 C14,100 21,101 22,106 C23,112 17,116 12,114 M8,106 L10,103 L13,105"/><circle cx="15.5" cy="108.5" r="1.4" fill="#c8c8c8"/>
</g>
</svg>
<div class="a inp2" style="left:276px;top:50px;width:56px">-45°</div>
<div class="a inp2" style="left:276px;top:96px;width:56px">35°</div>
<div class="a inp2" style="left:276px;top:142px;width:56px">-30°</div>
<div class="a dl" style="left:217px;top:183px">透视 (R):</div>
<div class="a inp2" style="left:277px;top:182px;width:37px">0°</div>
<div class="a" style="left:314px;top:182px;width:18px;height:19px;background:#4c4c4c;border:1px solid #5a5a5a"><svg class="a" style="left:4px;top:4px" width="9" height="10"><path d="M2,1.5 L6,5 L2,8.5" stroke="#eee" stroke-width="1.5" fill="none"/></svg></div>
<div class="a" style="left:18px;top:250px;width:62px;height:18px;background:#535353"></div>
<div class="a dl" style="left:22px;top:250px">表面 (S):</div>
<div class="a" style="left:80px;top:247px;width:90px;height:18px;background:#474747;border:1px solid #4f4f4f"></div>
<div class="a dv" style="left:87px;top:248px">扩散底纹</div>
<svg class="a" style="left:155px;top:252px" width="10" height="8"><path d="M1,2 L5,6 L9,2" stroke="#eaeaea" stroke-width="1.5" fill="none"/></svg>
<div class="a" style="left:76.5px;top:241.5px;width:109px;height:26px;border:3px solid #e2323c"></div>
<div class="a" style="left:24px;top:281px;width:67px;height:66px;border:1px dotted #4a4a4a"></div>
<div class="a" style="left:27.5px;top:284px;width:60px;height:60px;border-radius:50%;background:radial-gradient(circle at 60% 42%,#dedede 0,#bfbfbf 28%,#9b9b9b 66%,#808080 100%)"></div>
<div class="a" style="left:64px;top:299px;width:11px;height:11px;background:#000"></div>
<div class="a" style="left:66.5px;top:301.5px;width:6px;height:6px;border-radius:50%;background:#fff"></div>
<svg class="a" style="left:24px;top:352px" width="70" height="16">
<path d="M2,5 H6 V2 L11,7 L6,12 V9 H2 Z" fill="#cfcfcf"/><circle cx="14" cy="7" r="5" fill="#cfcfcf"/><path d="M9,3 L11,7 L9,11" stroke="#535353" stroke-width="1.2" fill="none"/>
<path d="M31,2 H41 V12 H35 V8 H31 Z" fill="#cfcfcf"/>
<g fill="none" stroke="#6e6e6e" stroke-width="1"><path d="M56,4 H68 M58,4 V14 H66 V4 M60,6 V12 M62,6 V12 M64,6 V12 M60,4 V2.5 H64 V4"/></g>
</svg>
<div class="a dl" style="left:110px;top:280px">光源强度 (L):</div>
<div class="a inp2" style="left:195px;top:279px;width:51px;height:20px;line-height:16px">100%</div>
<div class="a" style="left:246px;top:279px;width:18px;height:20px;background:#4c4c4c;border:1px solid #5a5a5a"><svg class="a" style="left:4px;top:5px" width="9" height="10"><path d="M2,1.5 L6,5 L2,8.5" stroke="#eee" stroke-width="1.5" fill="none"/></svg></div>
<div class="a dl" style="left:122px;top:311px">环境光 (A):</div>
<div class="a inp2" style="left:195px;top:310px;width:51px;height:20px;line-height:16px">65%</div>
<div class="a" style="left:246px;top:310px;width:18px;height:20px;background:#2f2f2f"><svg class="a" style="left:5px;top:5px" width="9" height="10"><path d="M2,1.5 L6,5 L2,8.5" stroke="#eee" stroke-width="1.5" fill="none"/></svg></div>
<div class="a" style="left:164px;top:331px;width:96px;height:27px;background:#515151;border:1px solid #4a4a4a;box-shadow:2px 3px 3px rgba(0,0,0,.45)"></div>
<div class="a" style="left:172px;top:343px;width:82px;height:2px;background:#6c6c6c"></div>
<div class="a" style="left:217.5px;top:337.5px;width:13px;height:13px;border-radius:50%;background:#3d9cf4"></div>
<div class="a" style="left:257px;top:337px;width:143px;height:21px;background:linear-gradient(#fdfdfd,#e6e6f0);border:1px solid #7c7c84;border-radius:2px;box-shadow:2px 2px 3px rgba(0,0,0,.5);color:#3a3a3a;font-size:12px;line-height:19px;padding-left:5px;white-space:nowrap">统一控制所有表面的亮度</div>
<div class="a" style="left:116.5px;top:306.5px;width:292px;height:67px;border:3px solid #e2323c"></div>
<div class="a dl" style="left:110px;top:435px">底纹颜色 (C):</div>
<div class="a" style="left:195px;top:433px;width:63px;height:20px;background:#474747;border:1px solid #4f4f4f"></div>
<div class="a dv" style="left:202px;top:434px">黑色</div>
<svg class="a" style="left:242px;top:439px" width="10" height="8"><path d="M1,2 L5,6 L9,2" stroke="#eaeaea" stroke-width="1.5" fill="none"/></svg>
<div class="a" style="left:22px;top:465px;width:12px;height:12px;border:1px solid #cfcfcf"></div>
<div class="a dl" style="left:39px;top:463px;color:#dcdcdc">保留专色 (<u>V</u>)</div>
<div class="a" style="left:12px;top:515px;width:13px;height:13px;background:#cfcfcf"></div>
<svg class="a" style="left:12px;top:515px" width="13" height="13"><path d="M2.5,6.5 L5.5,9.5 L10.5,3" stroke="#333" stroke-width="1.8" fill="none"/></svg>
<div class="a dl" style="left:30px;top:513px;color:#e6e6e6">预览 (<u>P</u>)</div>
<div class="a" style="left:4.5px;top:512.5px;width:80px;height:22px;border:3px solid #e2323c"></div>
<div class="a pill" style="left:203px;top:509px;width:101px;height:26px;border-width:1.5px">较少选项 (<u>O</u>)</div>
<div class="a pill" style="left:319px;top:509px;width:92px;height:26px;border-width:2.5px;line-height:21px">确定</div>
<div class="a pill" style="left:417px;top:509px;width:90px;height:26px;border-width:1.5px;text-align:left;padding-left:31px">重置</div>
</div>
</body></html>
